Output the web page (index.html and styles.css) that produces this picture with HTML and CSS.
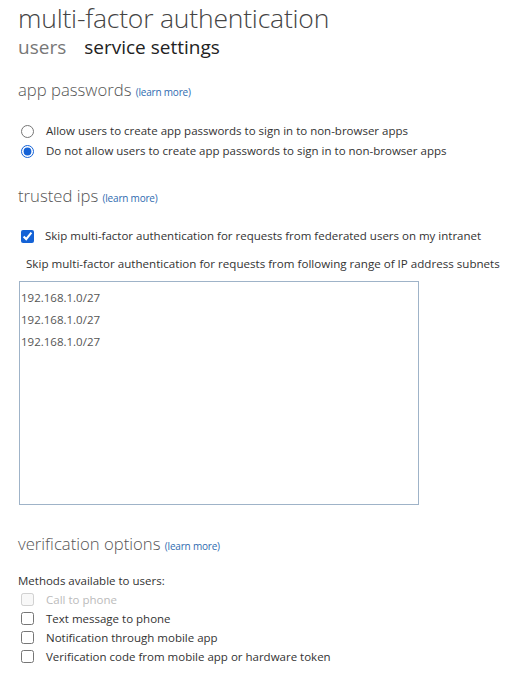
FILE: index.html
```html
<!DOCTYPE html>
<html>
<head>
<meta charset="utf-8">
<link rel="stylesheet" href="styles.css">
</head>
<body>
<div class="page">
  <h1 class="title">multi-factor authentication</h1>
  <nav class="tabs">
    <span class="tab">users</span>
    <span class="tab active">service settings</span>
  </nav>

  <section class="section">
    <h2 class="heading">app passwords <a class="learn">(learn more)</a></h2>
    <div class="options radios">
      <label class="opt"><input type="radio" name="ap"><span>Allow users to create app passwords to sign in to non-browser apps</span></label>
      <label class="opt"><input type="radio" name="ap" checked><span>Do not allow users to create app passwords to sign in to non-browser apps</span></label>
    </div>
  </section>

  <section class="section trusted">
    <h2 class="heading">trusted ips <a class="learn">(learn more)</a></h2>
    <label class="opt fed"><input type="checkbox" checked><span>Skip multi-factor authentication for requests from federated users on my intranet</span></label>
    <p class="subnet">Skip multi-factor authentication for requests from following range of IP address subnets</p>
    <div class="ipbox">
      <div class="ip">192.168.1.0/27</div>
      <div class="ip">192.168.1.0/27</div>
      <div class="ip">192.168.1.0/27</div>
    </div>
  </section>

  <section class="section verify">
    <h2 class="heading">verification options <a class="learn">(learn more)</a></h2>
    <p class="methods">Methods available to users:</p>
    <div class="checks">
      <label class="opt chk disabled"><input type="checkbox" disabled><span>Call to phone</span></label>
      <label class="opt chk"><input type="checkbox"><span>Text message to phone</span></label>
      <label class="opt chk"><input type="checkbox"><span>Notification through mobile app</span></label>
      <label class="opt chk"><input type="checkbox"><span>Verification code from mobile app or hardware token</span></label>
    </div>
  </section>
</div>
</body>
</html>
```

FILE: styles.css
```css
* { box-sizing: border-box; }
html, body { margin: 0; padding: 0; background: #fff; }
body {
  font-family: "Open Sans", "Noto Sans", "Liberation Sans", sans-serif;
  color: #333;
}
.page {
  padding: 0 0 0 18px;
  display: flex;
  flex-direction: column;
}
.title {
  margin: 0;
  font-weight: 300;
  font-size: 26.5px;
  line-height: 36px;
  color: #444;
  letter-spacing: -0.2px;
}
.tabs {
  display: flex;
  gap: 18px;
  font-size: 19px;
  line-height: 24px;
  margin-top: -1px;
}
.tab { color: #777; }
.tab.active { color: #222; }
.section { display: flex; flex-direction: column; }
.heading {
  margin: 19px 0 0 0;
  font-weight: 300;
  font-size: 16.7px;
  line-height: 24px;
  color: #555;
}
.learn {
  font-size: 10px;
  color: #2f6bb0;
  font-weight: 400;
  letter-spacing: -0.2px;
}
.options.radios {
  margin-top: 17px;
  display: flex;
  flex-direction: column;
}
.opt {
  display: flex;
  align-items: center;
  font-size: 11.5px;
  line-height: 20px;
  color: #333;
  margin-left: 3px;
}
.opt input {
  margin: 0 12px 0 0;
  width: 13px;
  height: 13px;
  accent-color: #1462d6;
}
.trusted .heading { margin-top: 23px; }
.fed { margin-top: 16px; }
.fed input { margin-right: 11px; }
.subnet {
  margin: 8px 0 0 8px;
  font-size: 11.6px;
  line-height: 20px;
  color: #333;
}
.ipbox {
  margin: 7px 0 0 1px;
  width: 400px;
  height: 224px;
  border: 1px solid #9fb3c8;
  padding: 5px 0 0 1px;
  display: flex;
  flex-direction: column;
}
.ip {
  font-size: 11.5px;
  line-height: 22px;
  color: #555;
}
.verify .heading { margin-top: 27px; }
.methods {
  margin: 14px 0 0 0;
  font-size: 11.5px;
  line-height: 18px;
  color: #333;
}
.checks { display: flex; flex-direction: column; margin-top: 0; }
.chk { line-height: 19px; }
.disabled { color: #bbb; }
```
